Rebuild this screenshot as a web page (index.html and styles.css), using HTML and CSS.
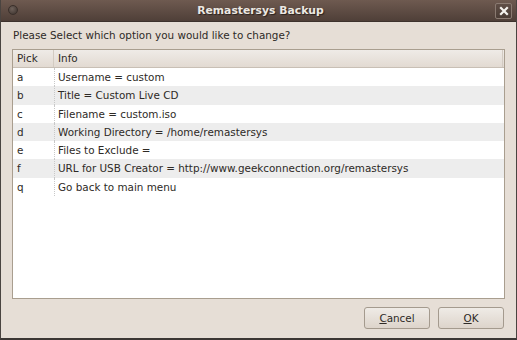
FILE: index.html
```html
<!DOCTYPE html>
<html>
<head>
<meta charset="utf-8">
<link rel="stylesheet" href="styles.css">
</head>
<body>
<div class="window">
  <div class="titlebar">
    <span class="menu-btn"></span>
    <span class="title">Remastersys Backup</span>
    <span class="close-btn">
      <svg width="10" height="10" viewBox="0 0 10 10"><path d="M2 2 L8 8 M8 2 L2 8" stroke="#f4f2ee" stroke-width="2.2" stroke-linecap="square"/></svg>
    </span>
  </div>
  <div class="content">
    <div class="prompt">Please Select which option you would like to change?</div>
    <div class="tree">
      <div class="header">
        <div class="hcell pick">Pick</div>
        <div class="hcell info">Info</div>
        <div class="hcell filler"></div>
      </div>
      <div class="row"><div class="cell pick">a</div><div class="cell info">Username = custom</div></div>
      <div class="row alt"><div class="cell pick">b</div><div class="cell info">Title = Custom Live CD</div></div>
      <div class="row"><div class="cell pick">c</div><div class="cell info">Filename = custom.iso</div></div>
      <div class="row alt"><div class="cell pick">d</div><div class="cell info">Working Directory = /home/remastersys</div></div>
      <div class="row"><div class="cell pick">e</div><div class="cell info">Files to Exclude =</div></div>
      <div class="row alt"><div class="cell pick">f</div><div class="cell info">URL for USB Creator = http://www.geekconnection.org/remastersys</div></div>
      <div class="row"><div class="cell pick">q</div><div class="cell info">Go back to main menu</div></div>
    </div>
    <div class="buttons">
      <button class="btn"><u>C</u>ancel</button>
      <button class="btn"><u>O</u>K</button>
    </div>
  </div>
</div>
</body>
</html>
```
FILE: styles.css
```css
* { box-sizing: border-box; }
html, body { margin: 0; padding: 0; }
body {
  width: 517px;
  height: 340px;
  overflow: hidden;
  font-family: "DejaVu Sans", sans-serif;
  font-size: 10.4px;
  color: #2e2a26;
  background: #e6ded6;
}
.window {
  width: 517px;
  height: 340px;
  display: flex;
  flex-direction: column;
  border-left: 1px solid #4a4440;
  border-right: 1px solid #4a4440;
  border-bottom: 2px solid #3c3734;
  background: #e6ded6;
}
.titlebar {
  height: 22px;
  flex: none;
  display: flex;
  align-items: center;
  position: relative;
  background: linear-gradient(#6e5a50, #4f3f38);
  border-bottom: 1px solid #3e322d;
}
.menu-btn {
  position: absolute;
  left: 7px;
  top: 5px;
  width: 10px;
  height: 10px;
  border-radius: 50%;
  background: radial-gradient(circle at 40% 35%, #6f625b, #3a302b);
  border: 1px solid #3a2f2a;
}
.title {
  flex: 1;
  text-align: center;
  font-weight: bold;
  font-size: 10.8px;
  color: #ece8e2;
  text-shadow: 1px 1px 1px #2a211d;
  padding-left: 4px;
}
.close-btn {
  position: absolute;
  right: 4px;
  top: 3px;
  width: 17px;
  height: 16px;
  border: 1px solid #8a7a71;
  border-radius: 2px;
  background: linear-gradient(#5f4e46, #4a3c35);
  display: flex;
  align-items: center;
  justify-content: center;
}
.content {
  flex: 1;
  display: flex;
  flex-direction: column;
  padding: 3px 11px 9px 11px;
}
.prompt {
  height: 20px;
  line-height: 20px;
  padding-left: 1px;
  margin-bottom: 4px;
}
.tree {
  height: 250px;
  background: #fff;
  border: 1px solid #a99e8f;
}
.header {
  display: flex;
  height: 18px;
  background: linear-gradient(#efebe7, #e2dad2);
  border-bottom: 1px solid #c8bfb5;
}
.hcell {
  line-height: 17px;
  padding-left: 4px;
  border-right: 1px solid #d3cbc2;
}
.hcell.pick { width: 41px; }
.hcell.info { width: 50px; border-right: none; }
.hcell.filler { flex: 1; border-right: 1px solid #d3cbc2; margin-right: 1px; }
.row {
  display: flex;
  height: 18.3px;
  line-height: 18px;
}
.row.alt { background: #ededed; }
.cell { padding-left: 4px; }
.cell.pick {
  width: 42px;
  border-right: 1px dotted #c8c8c8;
}
.cell.info { flex: 1; padding-left: 3px; }
.buttons {
  display: flex;
  justify-content: flex-end;
  gap: 8px;
  margin-top: auto;
  padding-right: 1px;
}
.btn {
  width: 66px;
  height: 22px;
  font-family: "DejaVu Sans", sans-serif;
  font-size: 10.4px;
  color: #2e2a26;
  border: 1px solid #a49a8e;
  border-radius: 3px;
  background: linear-gradient(#efebe6, #ddd4cb);
  padding: 0;
}
.btn u { text-decoration: underline; }
```
